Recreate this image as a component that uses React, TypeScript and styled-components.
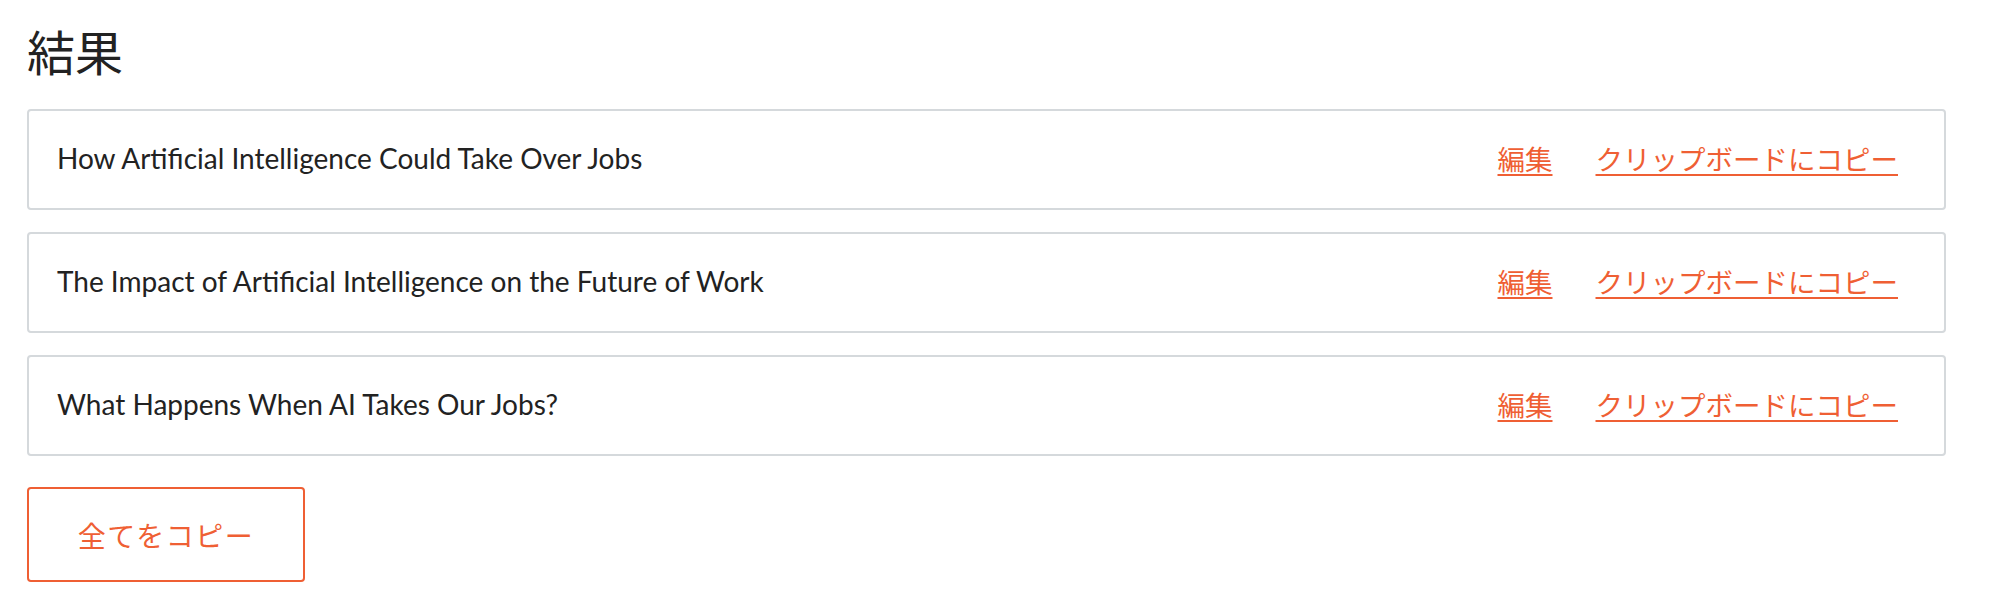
import React from "react";
import styled, { createGlobalStyle } from "styled-components";

const GlobalStyle = createGlobalStyle`
  body {
    margin: 0;
    background: #ffffff;
    font-family: Lato, "Noto Sans CJK JP", sans-serif;
    color: #222222;
  }
`;

const ACCENT = "#ef5f34";

const Page = styled.div`
  padding: 14px 46px 30px 27px;
`;

const Title = styled.h1`
  margin: 0 0 23px 0;
  font-family: "Noto Sans CJK JP", sans-serif;
  font-weight: 400;
  font-size: 48px;
  line-height: 72px;
  color: #222222;
`;

const List = styled.div`
  display: flex;
  flex-direction: column;
  gap: 22px;
`;

const Card = styled.div`
  display: flex;
  align-items: center;
  justify-content: space-between;
  height: 101px;
  box-sizing: border-box;
  padding: 0 46px 4px 28px;
  border: 2px solid #d5d9dc;
  border-radius: 4px;
`;

const Headline = styled.span`
  font-family: Lato, "Noto Sans CJK JP", sans-serif;
  font-size: 28px;
  color: #222222;
`;

const Actions = styled.div`
  display: flex;
  align-items: center;
  gap: 43px;
`;

const ActionLink = styled.a`
  font-family: "Noto Sans CJK JP", sans-serif;
  font-size: 27.5px;
  color: ${ACCENT};
  text-decoration: underline;
  text-decoration-thickness: 2px;
  text-underline-offset: 4px;
  cursor: pointer;
`;

const CopyAllButton = styled.button`
  margin-top: 31px;
  width: 278px;
  height: 95px;
  background: #ffffff;
  border: 2px solid ${ACCENT};
  border-radius: 4px;
  color: ${ACCENT};
  font-family: "Noto Sans CJK JP", sans-serif;
  font-size: 28px;
  letter-spacing: 1.5px;
  cursor: pointer;
`;

const titles = [
  "How Artificial Intelligence Could Take Over Jobs",
  "The Impact of Artificial Intelligence on the Future of Work",
  "What Happens When AI Takes Our Jobs?",
];

const App: React.FC = () => {
  return (
    <>
      <GlobalStyle />
      <Page>
        <Title>結果</Title>
        <List>
          {titles.map((t) => (
            <Card key={t}>
              <Headline>{t}</Headline>
              <Actions>
                <ActionLink>編集</ActionLink>
                <ActionLink>クリップボードにコピー</ActionLink>
              </Actions>
            </Card>
          ))}
        </List>
        <CopyAllButton>全てをコピー</CopyAllButton>
      </Page>
    </>
  );
};

export default App;
